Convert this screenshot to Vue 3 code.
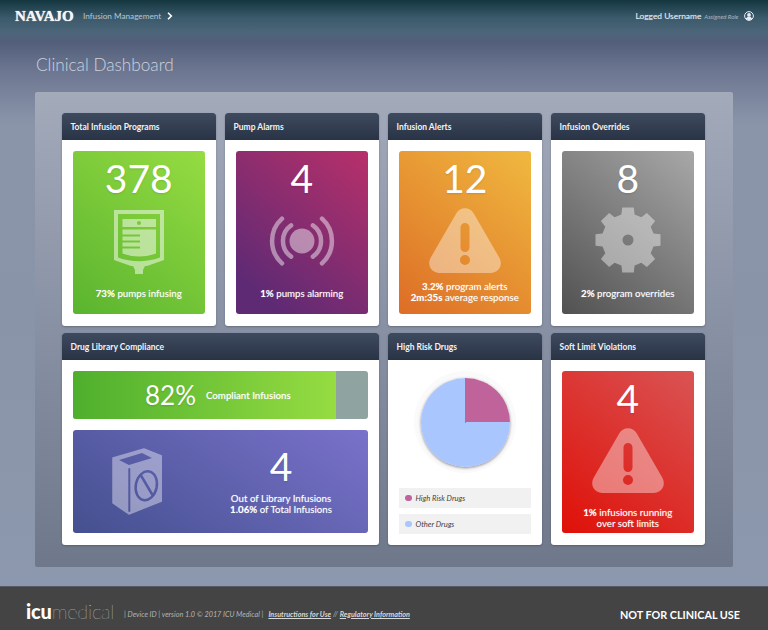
<script setup>
const gearPts = []
for (let i = 0; i < 8; i++) {
  const a = (i * Math.PI) / 4
  const pts = [[-6.6, -25.5], [-5.8, -32.5], [5.8, -32.5], [6.6, -25.5]]
  for (const [x, y] of pts) {
    gearPts.push(`${(x * Math.cos(a) - y * Math.sin(a)).toFixed(2)},${(x * Math.sin(a) + y * Math.cos(a)).toFixed(2)}`)
  }
}
const gearPath = 'M' + gearPts.join('L') + 'Z M5.5 0a5.5 5.5 0 1 1-11 0a5.5 5.5 0 1 1 11 0Z'
const warn = 'M27.5 5a10 10 0 0 1 17 0L70.5 50a10 10 0 0 1-8.5 15H10a10 10 0 0 1-8.5-15ZM36 15a4.5 4.5 0 0 1 4.5 4.5v20a4.5 4.5 0 0 1-9 0v-20a4.5 4.5 0 0 1 4.5-4.5ZM41 52a5 5 0 1 1-10 0a5 5 0 1 1 10 0Z'
</script>

<template>
  <div class="page">
    <header class="top">
      <span class="logo">NAVAJO</span>
      <span class="crumb">Infusion Management</span>
      <svg class="chev" width="6" height="8" viewBox="0 0 6 8"><path d="M1 .8 4.3 4 1 7.2" fill="none" stroke="#fff" stroke-width="1.6"/></svg>
      <span class="user">Logged Username</span>
      <span class="role">Assigned Role</span>
      <svg class="avatar" width="10" height="10" viewBox="0 0 10 10">
        <circle cx="5" cy="5" r="4.4" fill="none" stroke="#e8ecf0" stroke-width="1"/>
        <circle cx="5" cy="3.9" r="1.9" fill="#e8ecf0"/>
        <path d="M1.8 8c.6-1.6 1.8-2.2 3.2-2.2S7.600 6.400 8.200 8c-1.600 1.500-4.800 1.500-6.400 0Z" fill="#e8ecf0"/>
      </svg>
    </header>

    <h1 class="title">Clinical Dashboard</h1>

    <main class="panel">
      <div class="grid">
        <section class="card">
          <h2>Total Infusion Programs</h2>
          <div class="body">
            <div class="tile green">
              <div class="num">378</div>
              <svg class="ico" width="50" height="64" viewBox="0 0 50 64" fill="#fff" fill-rule="evenodd" opacity=".5">
                <path d="M0 0H50V50L33 56H31L29 60V64H21V60L19 56H17L0 50ZM4 4V47.500Q25 55 46 47.500V4Z"/>
                <path d="M8.500 9H42V17H8.500ZM25 11a2 2 0 1 0 0 4a2 2 0 1 0 0-4Z"/>
                <path d="M8.500 19.500H42V43.500Q25 49.500 8.500 43.500V38.500H26V36.500H8.500V32.500H26V30.500H8.500V26.500H26V24.500H8.500Z"/>
              </svg>
              <p class="lab lab-one"><b>73%</b> pumps infusing</p>
            </div>
          </div>
        </section>

        <section class="card">
          <h2>Pump Alarms</h2>
          <div class="body">
            <div class="tile purple">
              <div class="num">4</div>
              <svg class="ico ico-alarm" width="66" height="50" viewBox="-33 -25 66 50" opacity=".45">
                <circle r="12.500" fill="#fff"/>
                <path d="M-20-22.300A30 30 0 0 0-20 22.300M20-22.300A30 30 0 0 1 20 22.300M-10.900-15.600A19 19 0 0 0-10.900 15.600M10.900-15.600A19 19 0 0 1 10.900 15.600" fill="none" stroke="#fff" stroke-width="4.500" stroke-linecap="round"/>
              </svg>
              <p class="lab lab-one"><b>1%</b> pumps alarming</p>
            </div>
          </div>
        </section>

        <section class="card">
          <h2>Infusion Alerts</h2>
          <div class="body">
            <div class="tile orange">
              <div class="num">12</div>
              <svg class="ico ico-warn" width="72" height="65" viewBox="0 0 72 65"><path :d="warn" fill="#fff" fill-rule="evenodd" opacity=".4"/></svg>
              <p class="lab lab-two"><b>3.2%</b> program alerts<br><b>2m:35s</b> average response</p>
            </div>
          </div>
        </section>

        <section class="card">
          <h2>Infusion Overrides</h2>
          <div class="body">
            <div class="tile grey">
              <div class="num">8</div>
              <svg class="ico ico-gear" width="66" height="66" viewBox="-33 -33 66 66"><path :d="gearPath" fill="#fff" fill-rule="evenodd" opacity=".42"/></svg>
              <p class="lab lab-one"><b>2%</b> program overrides</p>
            </div>
          </div>
        </section>

        <section class="card wide">
          <h2>Drug Library Compliance</h2>
          <div class="body stack">
            <div class="bar">
              <div class="bar-fill">
                <span class="pct">82%</span>
                <span class="pct-lab">Compliant Infusions</span>
              </div>
            </div>
            <div class="tile indigo">
              <svg class="book" width="50" height="67" viewBox="0 0 50 67">
                <mask id="bookmask">
                  <rect width="50" height="67" fill="#fff"/>
                  <path d="M7 12 30 5 40 10 17 17Z" fill="#000"/>
                  <path d="M17.300 21V63" stroke="#000" stroke-width="2" stroke-linecap="round" fill="none"/>
                  <ellipse cx="34.300" cy="37.700" rx="10.500" ry="14.600" transform="rotate(12 34.300 37.700)" fill="none" stroke="#000" stroke-width="2.500"/>
                  <path d="M29 27.500 40.500 47" stroke="#000" stroke-width="2.500"/>
                </mask>
                <path d="M1 10 32 1 49.500 8V53L17 66 1 55Z" fill="#fff" opacity=".4" mask="url(#bookmask)" stroke="#fff" stroke-width="1.500" stroke-linejoin="round"/>
              </svg>
              <div class="oob">
                <div class="num">4</div>
                <p class="lab">Out of Library Infusions<br><b>1.06%</b> of Total Infusions</p>
              </div>
            </div>
          </div>
        </section>

        <section class="card">
          <h2>High Risk Drugs</h2>
          <div class="body legendbody">
            <div class="halo"><div class="pie"></div></div>
            <div class="leg"><i class="dot pink"></i><em>High Risk Drugs</em></div>
            <div class="leg"><i class="dot blue"></i><em>Other Drugs</em></div>
          </div>
        </section>

        <section class="card">
          <h2>Soft Limit Violations</h2>
          <div class="body">
            <div class="tile red">
              <div class="num">4</div>
              <svg class="ico ico-warn" width="72" height="65" viewBox="0 0 72 65"><path :d="warn" fill="#fff" fill-rule="evenodd" opacity=".4"/></svg>
              <p class="lab lab-red"><b>1%</b> infusions running<br>over soft limits</p>
            </div>
          </div>
        </section>
      </div>
    </main>

    <footer class="foot">
      <span class="icu"><b>icu</b>medical</span>
      <span class="meta">| Device ID | version 1.0 © 2017 ICU Medical |</span>
      <a class="link">Insutructions for Use</a>
      <span class="sep">//</span>
      <a class="link">Regulatory Information</a>
      <span class="nfc">NOT FOR CLINICAL USE</span>
    </footer>
  </div>
</template>

<style scoped>
.page {
  width: 768px;
  height: 630px;
  overflow: hidden;
  display: flex;
  flex-direction: column;
  font-family: Lato, "Open Sans", sans-serif;
  background: linear-gradient(180deg, #14363f 0, #3b5a6c 18px, #4c6579 32px, #535f7a 42px, #6d7792 72px, #8b95aa 125px, #8a94a9 320px, #8c98ad 586px);
}
.top {
  height: 32px;
  flex: none;
  display: flex;
  align-items: center;
  padding: 0 14.500px 0 15px;
  color: #fff;
}
.logo {
  font-family: "Liberation Serif", serif;
  font-weight: 700;
  font-size: 15px;
  width: 59px;
  color: #f4f6f7;
  text-shadow: 0 0 1px #fff;
}
.crumb { margin-left: 9px; font-size: 8.200px; color: #b7c4d0; }
.chev { margin-left: 6px; }
.user { margin-left: auto; font-size: 8.400px; color: #e8ecef; text-shadow: 0 0 1px rgba(255, 255, 255, .35); }
.role { margin-left: 3px; font-size: 6px; font-style: italic; color: #a9b5c1; }
.avatar { margin-left: 5px; }
.title {
  margin: 20px 0 0 36px;
  height: 40px;
  flex: none;
  font-size: 17.200px;
  line-height: 26px;
  font-weight: 300;
  color: #ccd2de;
}
.panel {
  flex: none;
  width: 698px;
  height: 475px;
  margin-left: 35px;
  box-sizing: border-box;
  padding: 21px 28px 0 27px;
  border-radius: 2px;
  background: linear-gradient(180deg, #a3aaba 0, #8c94a7 200px, #6f778b 475px);
}
.grid {
  display: grid;
  grid-template-columns: repeat(4, 154px);
  grid-template-rows: 213px 212px;
  gap: 7px 9px;
}
.card {
  background: #fff;
  border-radius: 3px;
  display: flex;
  flex-direction: column;
  box-shadow: 0 1px 2px rgba(40, 45, 60, .35);
}
.wide { grid-column: span 2; }
.card h2 {
  margin: 0;
  height: 27px;
  flex: none;
  box-sizing: border-box;
  padding-left: 8.500px;
  border-radius: 3px 3px 0 0;
  background: linear-gradient(180deg, #3e4a5e, #293346);
  color: #f1f3f5;
  font-size: 8.500px;
  font-weight: 700;
  line-height: 28px;
}
.body { flex: 1; padding: 11px 11.500px 12px 11px; display: flex; flex-direction: column; min-height: 0; }
.tile {
  flex: 1;
  display: flex;
  flex-direction: column;
  align-items: center;
  border-radius: 3px;
  color: #fff;
  min-height: 0;
}
.num {
  font-size: 39px;
  line-height: 46px;
  height: 46px;
  margin-top: 4px;
  font-weight: 400;
  text-shadow: 0 1px 2px rgba(0, 0, 0, .12);
}
.ico { margin-top: 9px; display: block; flex: none; }
.ico-alarm { margin-top: 15px; }
.ico-warn { margin-top: 7px; }
.ico-gear { margin-top: 6px; }
.lab {
  margin: 0;
  font-size: 9.700px;
  line-height: 11px;
  text-align: center;
  color: #fff;
  text-shadow: 0 0 1px rgba(255, 255, 255, .45);
}
.lab-one { margin-top: auto; margin-bottom: 15.500px; }
.lab-two { margin-top: auto; margin-bottom: 11px; }
.lab-red { margin-top: auto; margin-bottom: 4.500px; }
.green { background: linear-gradient(40deg, #5ab42f, #96dc42); }
.purple { background: linear-gradient(40deg, #5f2a74 15%, #b8306a); }
.orange { background: linear-gradient(40deg, #dd6d26, #f0b93f); }
.grey { background: linear-gradient(40deg, #515151, #a8a8a8); }
.red { background: linear-gradient(40deg, #df1008, #d95454); }
.indigo { background: linear-gradient(35deg, #44508f, #7a72cb); }
.stack { gap: 11px; }
.bar {
  height: 48px;
  flex: none;
  background: #8fa3a0;
  border-radius: 3px;
  overflow: hidden;
}
.bar-fill {
  width: 263px;
  height: 48px;
  display: flex;
  align-items: center;
  background: linear-gradient(90deg, #4eaf2d, #96dc42);
  color: #fff;
}
.pct { margin-left: 72px; font-size: 26px; text-shadow: 0 1px 2px rgba(0, 0, 0, .15); }
.pct-lab { margin-left: 10px; font-size: 9.700px; font-weight: 500; text-shadow: 0 0 1px rgba(255, 255, 255, .45); }
.indigo { flex-direction: row; align-items: flex-start; }
.book { margin: 18px 0 0 39px; flex: none; }
.oob {
  margin-left: 54px;
  width: 130px;
  display: flex;
  flex-direction: column;
  align-items: center;
}
.oob .num { margin-top: 13px; }
.oob .lab { margin-top: 4px; }
.legendbody { padding: 0 11px 11px; }
.halo {
  width: 102px;
  height: 102px;
  margin: 11px auto 0;
  flex: none;
  border-radius: 50%;
  background: #fafafa;
  display: flex;
  align-items: center;
  justify-content: center;
}
.pie {
  width: 89px;
  height: 89px;
  border-radius: 50%;
  background: conic-gradient(#c0639b 0 25%, #aac6ff 25% 100%);
  box-shadow: 0 1px 3px rgba(40, 40, 60, .55);
}
.leg {
  height: 20px;
  flex: none;
  margin-top: 6px;
  display: flex;
  align-items: center;
  background: #f1f1f1;
  font-size: 7.600px;
  color: #444;
}
.halo + .leg { margin-top: 15px; }
.dot { width: 6.500px; height: 6.500px; border-radius: 50%; margin: 0 4px 0 6px; }
.pink { background: #c0639b; }
.blue { background: #aac6ff; }
.foot {
  margin-top: 19px;
  height: 44px;
  flex: none;
  background: #444;
  display: flex;
  align-items: center;
  box-sizing: border-box;
  padding: 11px 28px 0 26px;
  color: #b5b5b5;
  font-size: 7.250px;
  font-style: italic;
  border-top: 1px solid #555a64;
}
.icu {
  font-size: 20px;
  font-style: normal;
  font-weight: 100;
  color: #e0e0e0;
  letter-spacing: -.2px;
  width: 98px;
  margin-top: -6px;
}
.icu b { font-weight: 900; color: #fff; }
.meta { white-space: nowrap; }
.link { margin-left: 5px; font-size: 7.200px; font-weight: 700; color: #d8d8d8; text-decoration: underline; white-space: nowrap; }
.sep { margin-left: 2px; margin-right: -3px; }
.nfc {
  margin-left: auto;
  font-size: 10.800px;
  font-style: normal;
  font-weight: 700;
  color: #fff;
  white-space: nowrap;
}
</style>
